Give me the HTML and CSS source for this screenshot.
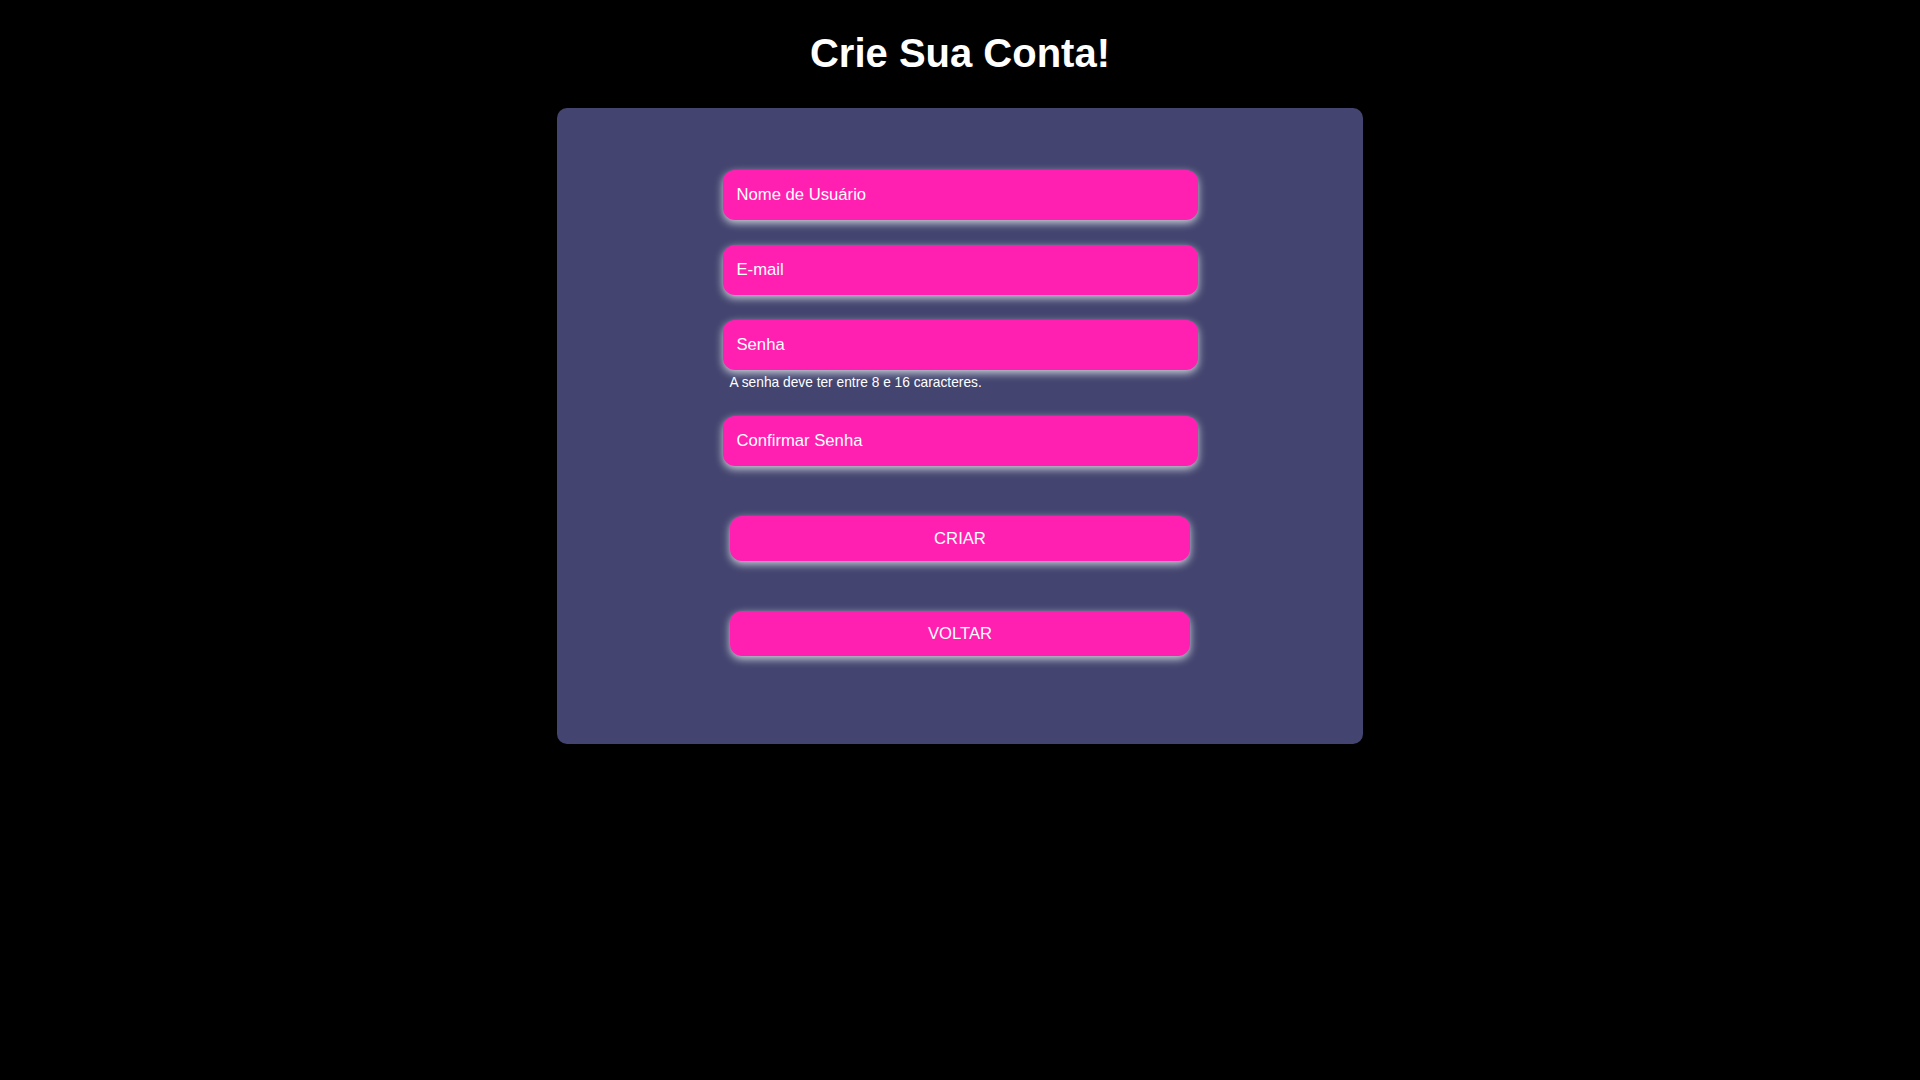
FILE: index.html
```html
<!DOCTYPE html>
<html lang="pt-BR">
<head>
<meta charset="utf-8">
<title>Crie Sua Conta!</title>
<link rel="stylesheet" href="styles.css">
</head>
<body>
  <h1 class="title">Crie Sua Conta!</h1>
  <main class="card">
    <form class="form">
      <input class="field" type="text" placeholder="Nome de Usuário">
      <input class="field" type="email" placeholder="E-mail">
      <input class="field field-tight" type="password" placeholder="Senha">
      <p class="hint">A senha deve ter entre 8 e 16 caracteres.</p>
      <input class="field" type="password" placeholder="Confirmar Senha">
      <button class="btn btn-first" type="button">CRIAR</button>
      <button class="btn" type="button">VOLTAR</button>
    </form>
  </main>
</body>
</html>
```
FILE: styles.css
```css
* { box-sizing: border-box; }

body {
  margin: 0;
  background: #000;
  font-family: "Liberation Sans", Arial, sans-serif;
  color: #fff;
}

.title {
  margin: 31px 0 32px;
  font-size: 40px;
  line-height: 45px;
  font-weight: bold;
  text-align: center;
  color: #fff;
}

.card {
  width: 806px;
  height: 636px;
  margin: 0 auto;
  background: #434570;
  border-radius: 10px;
  padding-top: 62px;
}

.form {
  display: flex;
  flex-direction: column;
  align-items: center;
}

.field {
  width: 475px;
  height: 50px;
  margin: 0 0 25px;
  padding: 0 14px;
  border: none;
  border-radius: 12px;
  background: #ff1fb1;
  color: #fff;
  font-family: "Liberation Sans", Arial, sans-serif;
  font-size: 16.67px;
  outline: none;
  box-shadow: 0 3px 9px rgba(255, 255, 255, 0.75);
}

.field::placeholder {
  color: #fff;
  opacity: 1;
}

.field-tight { margin-bottom: 0; }

.hint {
  width: 475px;
  margin: 5px 0 25px;
  padding-left: 7px;
  font-size: 13.75px;
  line-height: 16px;
  color: #fff;
}

.btn {
  width: 460px;
  height: 45px;
  margin-bottom: 50px;
  border: none;
  border-radius: 12px;
  background: #ff1fb1;
  color: #fff;
  font-family: "Liberation Sans", Arial, sans-serif;
  font-size: 16.67px;
  cursor: pointer;
  box-shadow: 0 3px 9px rgba(255, 255, 255, 0.75);
}

.btn-first { margin-top: 25px; }
```
